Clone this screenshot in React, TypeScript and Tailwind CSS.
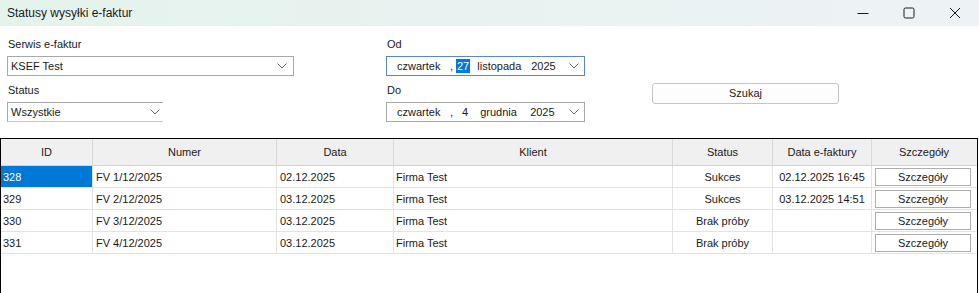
import React from "react";

type Row = {
  id: number;
  numer: string;
  data: string;
  klient: string;
  status: string;
  dataE: string;
};

const rows: Row[] = [
  { id: 328, numer: "FV 1/12/2025", data: "02.12.2025", klient: "Firma Test", status: "Sukces", dataE: "02.12.2025 16:45" },
  { id: 329, numer: "FV 2/12/2025", data: "03.12.2025", klient: "Firma Test", status: "Sukces", dataE: "03.12.2025 14:51" },
  { id: 330, numer: "FV 3/12/2025", data: "03.12.2025", klient: "Firma Test", status: "Brak próby", dataE: "" },
  { id: 331, numer: "FV 4/12/2025", data: "03.12.2025", klient: "Firma Test", status: "Brak próby", dataE: "" },
];

const cols = "grid grid-cols-[92px_184px_117px_279px_100px_99px_104px]";

const Chevron = () => (
  <svg width="10" height="6" viewBox="0 0 10 6" className="shrink-0">
    <polyline points="0.5,0.5 5,5 9.5,0.5" fill="none" stroke="#6b6b6b" strokeWidth="1" />
  </svg>
);

const TitleBar = () => (
  <div className="h-[26px] flex items-center bg-gradient-to-r from-[#e4f3ec] to-[#eef2f6] text-[12px] text-[#1a1a1a]">
    <span className="pl-[7px] flex-1">Statusy wysyłki e-faktur</span>
    <div className="flex items-center h-full pr-[1px]">
      <div className="w-[46px] h-full flex items-center justify-center">
        <svg width="12" height="12" viewBox="0 0 12 12">
          <line x1="0.5" y1="6.5" x2="11.5" y2="6.5" stroke="#1a1a1a" strokeWidth="1" />
        </svg>
      </div>
      <div className="w-[46px] h-full flex items-center justify-center">
        <svg width="12" height="12" viewBox="0 0 12 12">
          <rect x="1" y="1" width="10" height="10" rx="1.5" fill="none" stroke="#1a1a1a" strokeWidth="1" />
        </svg>
      </div>
      <div className="w-[46px] h-full flex items-center justify-center">
        <svg width="12" height="12" viewBox="0 0 12 12">
          <path d="M1 1 L11 11 M11 1 L1 11" stroke="#1a1a1a" strokeWidth="1" />
        </svg>
      </div>
    </div>
  </div>
);

const Label = ({ children }: { children: React.ReactNode }) => (
  <div className="h-[13px] leading-[13px] text-[11px] text-[#1a1a1a] pl-[1px]">{children}</div>
);

const DatePicker = ({ day, month, active }: { day: string; month: string; active?: boolean }) => (
  <div
    className={`mt-[5px] h-[20px] w-[199px] flex items-center bg-white border ${
      active ? "border-[#5b88c4]" : "border-[#a8a8a8]"
    } text-[11px] text-[#1a1a1a]`}
  >
    <span className="ml-[10px] w-[53px]">czwartek</span>
    <span className="w-[6px]">,</span>
    {active ? (
      <span className="px-[1px] bg-[#0078d7] text-white leading-[14px]">{day}</span>
    ) : (
      <span className="ml-[6px]">{day}</span>
    )}
    <span className={active ? "ml-[7px] w-[54px]" : "ml-[12px] w-[50px]"}>{month}</span>
    <span>2025</span>
    <span className="ml-auto mr-[5px]">
      <Chevron />
    </span>
  </div>
);

export default function App() {
  return (
    <div className="w-[979px] h-[293px] bg-white overflow-hidden font-['Liberation_Sans',Arial,sans-serif]">
      <TitleBar />
      <div className="flex pt-[12px] h-[112px]">
        <div className="ml-[7px] w-[287px]">
          <Label>Serwis e-faktur</Label>
          <div className="mt-[5px] h-[20px] flex items-center border border-[#a8a8a8] bg-white text-[11px] text-[#1a1a1a]">
            <span className="pl-[3px] flex-1">KSEF Test</span>
            <span className="mr-[6px]">
              <Chevron />
            </span>
          </div>
          <div className="mt-[8px]">
            <Label>Status</Label>
          </div>
          <div className="mt-[5px] h-[20px] w-[156px] flex items-center border-t border-l border-b border-t-[#a8a8a8] border-l-[#a8a8a8] border-b-[#c8c8c8] bg-white text-[11px] text-[#1a1a1a]">
            <span className="pl-[3px] flex-1">Wszystkie</span>
            <span className="mr-[3px]">
              <Chevron />
            </span>
          </div>
        </div>
        <div className="ml-[92px] w-[199px]">
          <Label>Od</Label>
          <DatePicker day="27" month="listopada" active />
          <div className="mt-[8px]">
            <Label>Do</Label>
          </div>
          <DatePicker day="4" month="grudnia" />
        </div>
        <div className="ml-[67px] pt-[42px]">
          <button className="w-[187px] h-[21px] border border-[#c4c4c4] rounded-[3px] bg-[#fdfdfd] text-[11px] text-[#1a1a1a]">
            Szukaj
          </button>
        </div>
      </div>
      <div className="h-[155px] w-[978px] border-t border-l border-r border-black bg-white text-[11px] text-[#1a1a1a]">
        <div className={`${cols} h-[27px] bg-[#f0f0f0] border-b border-[#d4d4d4]`}>
          {["ID", "Numer", "Data", "Klient", "Status", "Data e-faktury", "Szczegóły"].map((h, i) => (
            <div
              key={h}
              className={`flex items-center justify-center pt-[1px] ${i < 6 ? "border-r border-[#d9d9d9]" : ""}`}
            >
              {h}
            </div>
          ))}
        </div>
        {rows.map((r, idx) => (
          <div key={r.id} className={`${cols} h-[22px] border-b border-[#e3e3e3]`}>
            <div
              className={`flex items-center pl-[2px] pt-[2px] border-r border-[#e3e3e3] ${
                idx === 0 ? "bg-[#0078d7] text-white" : ""
              }`}
            >
              {r.id}
            </div>
            <div className="flex items-center pl-[3px] pt-[2px] border-r border-[#e3e3e3]">{r.numer}</div>
            <div className="flex items-center pl-[3px] pt-[2px] border-r border-[#e3e3e3]">{r.data}</div>
            <div className="flex items-center pl-[2px] pt-[2px] border-r border-[#e3e3e3]">{r.klient}</div>
            <div className="flex items-center justify-center pt-[2px] border-r border-[#e3e3e3]">{r.status}</div>
            <div className="flex items-center justify-center pt-[2px] border-r border-[#e3e3e3]">{r.dataE}</div>
            <div className="flex items-center pl-[3px] pr-[5px]">
              <div className="w-full h-[18px] border border-[#adadad] bg-white flex items-center justify-center pt-[1px]">
                Szczegóły
              </div>
            </div>
          </div>
        ))}
      </div>
    </div>
  );
}
